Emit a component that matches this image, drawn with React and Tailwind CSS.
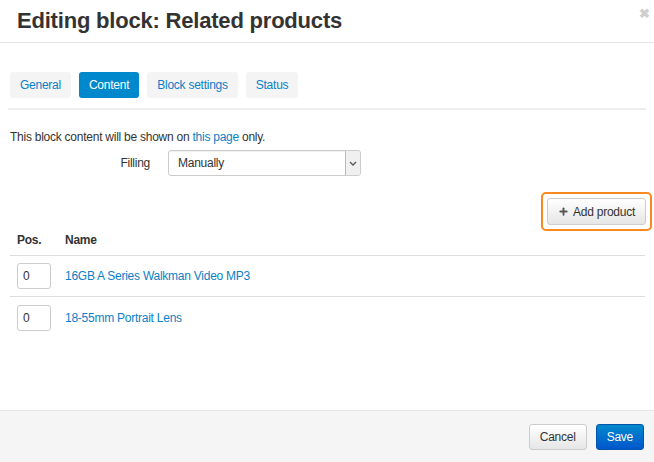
// Editing block modal: Related products, Content tab active.
import { Plus } from "lucide-react";

const tabs = ["General", "Content", "Block settings", "Status"];

const products = [
  { pos: 0, name: "16GB A Series Walkman Video MP3" },
  { pos: 0, name: "18-55mm Portrait Lens" },
];

export default function App() {
  return (
    <div
      className="w-[654px] h-[462px] bg-white flex flex-col text-[#333] overflow-hidden tracking-[-0.25px]"
      style={{ fontFamily: '"Liberation Sans", Arial, sans-serif' }}
    >
      {/* Header */}
      <div className="h-[43px] shrink-0 border-b border-[#e5e5e5] flex items-start justify-between pl-[17px] pr-[4px] pt-[6px]">
        <h1 className="text-[22px] leading-[29px] font-bold text-[#333] tracking-[-0.2px]">
          Editing block: Related products
        </h1>
        <span className="text-[#d0d0d0] text-[13px] leading-[13px] font-bold mt-[1px]">✖</span>
      </div>

      {/* Body */}
      <div className="flex-1 flex flex-col px-[8px] pt-[29px]">
        {/* Tabs */}
        <div className="flex gap-[8px] pl-[2px] border-b-2 border-[#eeeeee] pb-[10px]">
          {tabs.map((t) => (
            <div
              key={t}
              className={
                t === "Content"
                  ? "h-[26px] px-[10px] flex items-center rounded-[3px] text-[12px] bg-[#0088cc] text-white"
                  : "h-[26px] px-[10px] flex items-center rounded-[3px] text-[12px] bg-[#f4f4f4] text-[#0b7fc7]"
              }
            >
              {t}
            </div>
          ))}
        </div>

        <p className="text-[12px] pl-[2px] mt-[20px] leading-[14px]">
          This block content will be shown on{" "}
          <span className="text-[#0b7fc7]">this page</span> only.
        </p>

        {/* Filling */}
        <div className="flex items-center mt-[6px]">
          <label className="w-[142px] text-right text-[12px]">Filling</label>
          <div className="ml-[18px] w-[193px] h-[26px] border border-[#cccccc] rounded-[3px] flex items-center justify-between text-[12px] shadow-[inset_0_1px_1px_rgba(0,0,0,0.06)]">
            <span className="pl-[9px]">Manually</span>
            <span className="w-[15px] h-full border-l border-[#bbbbbb] bg-[#f0f0f0] flex items-center justify-center rounded-r-[3px]">
              <svg width="8" height="5" viewBox="0 0 8 5">
                <path d="M1 1l3 3 3-3" fill="none" stroke="#555" strokeWidth="1.3" />
              </svg>
            </span>
          </div>
        </div>

        {/* Add product */}
        <div className="flex justify-end mt-[16px] mr-[-6px]">
          <div className="border-2 border-[#f7891f] rounded-[5px] p-[4px]">
            <button className="h-[27px] px-[10px] flex items-center gap-[4px] text-[12px] text-[#333] border border-[#cccccc] rounded-[3px] bg-gradient-to-b from-white to-[#e6e6e6]">
              <Plus size={11} strokeWidth={4} className="text-[#555]" />
              Add product
            </button>
          </div>
        </div>

        {/* Table */}
        <div className="mx-[2px] mr-[1px]">
          <div className="flex items-start h-[25px] border-b border-[#dddddd] text-[12px] leading-[14px] font-bold pt-[2px]">
            <span className="w-[55px] pl-[7px]">Pos.</span>
            <span>Name</span>
          </div>
          {products.map((p, i) => (
            <div
              key={p.name}
              className={
                i === 0
                  ? "flex items-center h-[41px] border-b border-[#dddddd]"
                  : "flex items-center h-[41px]"
              }
            >
              <div className="ml-[7px] w-[34px] h-[26px] border border-[#cccccc] rounded-[3px] flex items-center pl-[5px] text-[12px]">
                {p.pos}
              </div>
              <span className="ml-[14px] text-[12px] text-[#0b7fc7]">{p.name}</span>
            </div>
          ))}
        </div>
      </div>

      {/* Footer */}
      <div className="h-[52px] shrink-0 border-t border-[#e5e5e5] bg-[#f5f5f5] flex items-center justify-end gap-[9px] pr-[10px]">
        <button className="h-[26px] px-[10px] text-[12px] text-[#333] border border-[#cccccc] rounded-[3px] bg-gradient-to-b from-white to-[#e6e6e6]">
          Cancel
        </button>
        <button className="h-[26px] px-[10px] text-[12px] text-white border border-[#0055aa] rounded-[3px] bg-gradient-to-b from-[#0088cc] to-[#0055cc]">
          Save
        </button>
      </div>
    </div>
  );
}
